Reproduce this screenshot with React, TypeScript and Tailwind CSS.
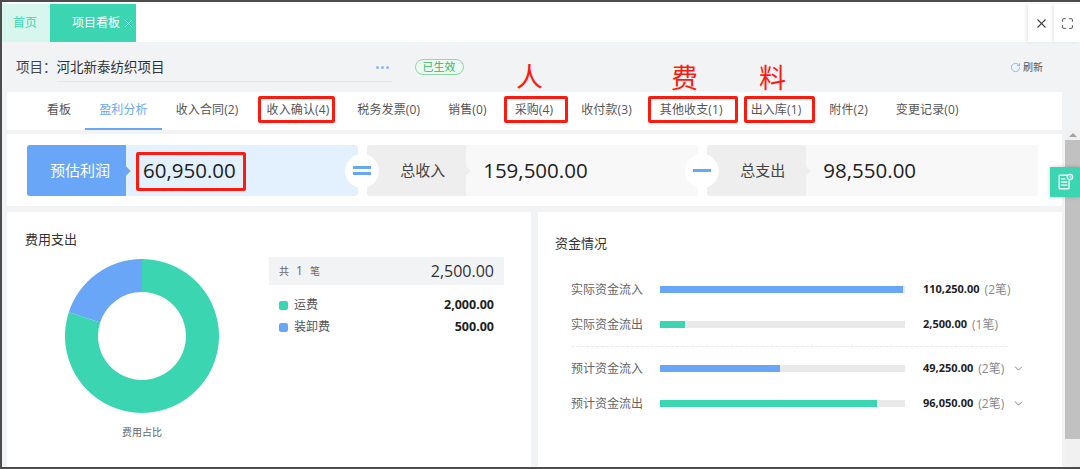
import React from "react";
import { X, Maximize, RotateCw, ChevronDown } from "lucide-react";

const tabs = [
  { label: "看板" },
  { label: "盈利分析", active: true },
  { label: "收入合同(2)" },
  { label: "收入确认(4)", box: "left-[5px] right-[8px]" },
  { label: "税务发票(0)" },
  { label: "销售(0)" },
  { label: "采购(4)", box: "left-[3px] -right-[1px]" },
  { label: "收付款(3)" },
  { label: "其他收支(1)", box: "left-[2px] -right-[1px]" },
  { label: "出入库(1)", box: "left-[7px] right-0" },
  { label: "附件(2)" },
  { label: "变更记录(0)" },
];

const cashRows = [
  { label: "实际资金流入", pct: 99.2, color: "bg-[#69a6f8]", amount: "110,250.00", count: "(2笔)" },
  { label: "实际资金流出", pct: 10, color: "bg-[#3bd6b1]", amount: "2,500.00", count: "(1笔)" },
];

const planRows = [
  { label: "预计资金流入", pct: 49, color: "bg-[#69a6f8]", amount: "49,250.00", count: "(2笔)", more: true },
  { label: "预计资金流出", pct: 88.6, color: "bg-[#3bd6b1]", amount: "96,050.00", count: "(2笔)", more: true },
];

const CashRow = ({ row }: { row: { label: string; pct: number; color: string; amount: string; count: string; more?: boolean } }) => (
  <div className="flex h-[35px] items-center">
    <div className="w-[89px] flex-none text-[12px] text-[#666]">{row.label}</div>
    <div className="h-[7px] w-[245px] flex-none bg-[#e9e9e9]">
      <div className={`h-full ${row.color}`} style={{ width: `${row.pct}%` }} />
    </div>
    <div className="ml-[18px] text-[11px] font-bold text-[#222]">{row.amount}</div>
    <div className="ml-[5px] text-[12px] text-[#888]">{row.count}</div>
    {row.more && <ChevronDown className="ml-[8px] size-[13px] text-[#666]" strokeWidth={1.5} />}
  </div>
);

const Arrow = ({ color }: { color: string }) => (
  <span className={`absolute -right-[3px] top-1/2 size-[8px] -translate-y-1/2 rotate-45 ${color}`} />
);

const Operator = ({ children }: { children: React.ReactNode }) => (
  <div className="absolute -left-[22px] top-1/2 z-10 flex size-[34px] -translate-y-1/2 flex-col items-center justify-center gap-[3px] rounded-full bg-white">
    {children}
  </div>
);

const Handwritten = ({ children, className }: { children: React.ReactNode; className: string }) => (
  <span className={`absolute text-[27px] leading-none text-[#ff1a10] ${className}`}>{children}</span>
);

export default function App() {
  return (
    <div className="relative flex h-[469px] w-[1080px] flex-col overflow-hidden border-y-2 border-l-2 border-[#4d4d4d] bg-[#f2f3f5] font-['Open_Sans','Noto_Sans_CJK_SC',sans-serif] text-[12px] text-[#444]">
      {/* top tabs */}
      <div className="flex h-[40px] flex-none bg-white pt-[2px]">
        <div className="flex w-[48px] items-center justify-center pr-[2px] bg-[#d7f6ed] text-[12px] text-[#3bd6b1]">首页</div>
        <div className="flex w-[86px] items-center gap-[3px] bg-[#3bd6b1] pl-[22px] text-[12px] text-white">
          项目看板
          <X className="size-[11px]" strokeWidth={1.8} />
        </div>
        <div className="ml-auto flex">
          <div className="flex w-[26px] items-center justify-center bg-white shadow-[-2px_0_3px_rgba(0,0,0,0.08)]">
            <X className="size-[15px] text-[#444]" strokeWidth={1.8} />
          </div>
          <div className="flex w-[26px] items-center justify-center bg-white shadow-[-2px_0_3px_rgba(0,0,0,0.08)]">
            <Maximize className="size-[13px] text-[#444]" strokeWidth={1.8} />
          </div>
        </div>
      </div>

      {/* project row */}
      <div className="flex h-[50px] flex-none items-center pl-[14px] pr-[37px]">
        <span className="text-[13.5px] text-[#444]">项目：</span>
        <div className="flex h-[30px] w-[335px] items-center justify-between border-b border-[#e6e7e9] pt-[1px] text-[13.5px] text-[#333]">
          河北新泰纺织项目
          <span className="mr-[3px] flex gap-[2px]">
            <span className="size-[3px] rounded-full bg-[#8ab8f8]" />
            <span className="size-[3px] rounded-full bg-[#8ab8f8]" />
            <span className="size-[3px] rounded-full bg-[#8ab8f8]" />
          </span>
        </div>
        <span className="ml-[23px] flex h-[16px] w-[49px] items-center justify-center rounded-full border border-[#8ed9a9] bg-[#effaf3] text-[11px] text-[#3cb56e]">已生效</span>
        <span className="ml-auto flex items-center gap-[2px] text-[10px] text-[#555]">
          <RotateCw className="size-[11px] text-[#6aa7f8]" strokeWidth={1.6} />
          刷新
        </span>
      </div>

      {/* nav tabs */}
      <div className="ml-[5px] mr-[18px] flex h-[38px] flex-none bg-white pl-[26px]">
        {tabs.map((t) => (
          <div
            key={t.label}
            className={`relative flex items-center px-[14px] text-[12px] tracking-[0.12px] ${t.active ? "border-b-[2px] border-[#6aa7f8] text-[#6aa7f8]" : "pb-[2px] text-[#555]"}`}
          >
            {t.label}
            {t.box && <span className={`absolute bottom-[7px] top-[4px] rounded-[2px] border-[3px] border-[#ff1a10] ${t.box}`} />}
          </div>
        ))}
      </div>

      <Handwritten className="left-[514px] top-[61px]">人</Handwritten>
      <Handwritten className="left-[669px] top-[62px]">费</Handwritten>
      <Handwritten className="left-[757px] top-[62px]">料</Handwritten>

      <div className="flex min-h-0 flex-1">
        <div className="min-w-0 flex-1 pl-[5px] pr-[3px] pt-[4px]">
          {/* profit summary */}
          <div className="grid h-[72px] grid-cols-3 gap-[9.5px] bg-white pb-[10px] pl-[20px] pr-[24px] pt-[11px]">
            <div className="flex rounded-[3px] bg-[#e3f0fe]">
              <div className="relative flex w-[99px] flex-none items-center justify-center rounded-l-[3px] bg-[#69a6f8] pl-[7px] text-[15px] text-white">
                预估利润
                <Arrow color="bg-[#69a6f8]" />
              </div>
              <div className="flex items-center pl-[17px] text-[20.5px] text-[#222]">
                <span className="relative">
                  60,950.00
                  <span className="absolute -bottom-[5px] -left-[7px] -right-[10px] -top-[3px] rounded-[2px] border-[3px] border-[#ff1a10]" />
                </span>
              </div>
            </div>
            <div className="relative flex rounded-[3px] bg-[#f8f8f8]">
              <Operator>
                <span className="h-[3px] w-[18px] bg-[#69a6f8]" />
                <span className="h-[3px] w-[18px] bg-[#69a6f8]" />
              </Operator>
              <div className="relative flex w-[99px] flex-none items-center justify-center rounded-l-[3px] bg-[#eeeeee] pl-[12px] text-[15px] text-[#444]">
                总收入
                <Arrow color="bg-[#eeeeee]" />
              </div>
              <div className="flex items-center pl-[17px] text-[20.5px] text-[#222]">159,500.00</div>
            </div>
            <div className="relative flex rounded-[3px] bg-[#f8f8f8]">
              <Operator>
                <span className="h-[3px] w-[18px] bg-[#69a6f8]" />
              </Operator>
              <div className="relative flex w-[99px] flex-none items-center justify-center rounded-l-[3px] bg-[#eeeeee] pl-[12px] text-[15px] text-[#444]">
                总支出
                <Arrow color="bg-[#eeeeee]" />
              </div>
              <div className="flex items-center pl-[17px] text-[20.5px] text-[#222]">98,550.00</div>
            </div>
          </div>

          <div className="mt-[6px] grid h-[255px] grid-cols-2 gap-[7px]">
            {/* expenses */}
            <div className="bg-white pt-[17px]">
              <div className="pl-[18px] text-[13px] leading-[20px] text-[#333]">费用支出</div>
              <div className="flex">
                <div className="ml-[58px] mt-[10px] flex w-[154px] flex-none flex-col items-center">
                  <svg viewBox="0 0 154 154" className="size-[154px]">
                    <path d="M77 0 A77 77 0 1 1 3.77 53.2 L35.15 63.4 A44 44 0 1 0 77 33 Z" fill="#3bd6b1" />
                    <path d="M77 0 A77 77 0 0 0 3.77 53.2 L35.15 63.4 A44 44 0 0 1 77 33 Z" fill="#69a6f8" />
                  </svg>
                  <div className="mt-[12px] text-[10px] text-[#666]">费用占比</div>
                </div>
                <div className="ml-[50px] mt-[8px] w-[235px] flex-none">
                  <div className="flex h-[28px] items-center justify-between bg-[#f2f3f5] px-[10px]">
                    <span className="text-[10px] text-[#666]">
                      共<span className="mx-[7px] text-[12px]">1</span>笔
                    </span>
                    <span className="text-[16px] text-[#333]">2,500.00</span>
                  </div>
                  <div className="mt-[9px] px-[10px]">
                    <div className="flex h-[22px] items-center">
                      <span className="mr-[6px] size-[9px] rounded-[2px] bg-[#3bd6b1]" />
                      <span className="text-[12px] text-[#555]">运费</span>
                      <span className="ml-auto text-[12.5px] font-bold text-[#222]">2,000.00</span>
                    </div>
                    <div className="flex h-[22px] items-center">
                      <span className="mr-[6px] size-[9px] rounded-[2px] bg-[#69a6f8]" />
                      <span className="text-[12px] text-[#555]">装卸费</span>
                      <span className="ml-auto text-[12.5px] font-bold text-[#222]">500.00</span>
                    </div>
                  </div>
                </div>
              </div>
            </div>

            {/* cash flow */}
            <div className="bg-white pl-[17px] pt-[21px]">
              <div className="text-[13px] leading-[20px] text-[#333]">资金情况</div>
              <div className="mt-[19px] pl-[16px]">
                {cashRows.map((r) => (
                  <CashRow key={r.label} row={r} />
                ))}
                <div className="my-[4px] w-[437px] border-t border-dashed border-[#e8e8e8]" />
                {planRows.map((r) => (
                  <CashRow key={r.label} row={r} />
                ))}
              </div>
            </div>
          </div>
        </div>

        {/* scrollbar */}
        <div className="flex w-[15px] flex-none flex-col items-center bg-[#f1f1f1]">
          <span className="mt-[3px] h-0 w-0 border-x-[4px] border-b-[4px] border-x-transparent border-b-[#a3a3a3]" />
          <div className="mt-[3px] h-[299px] w-full bg-[#c1c1c1]" />
        </div>
      </div>

      {/* floating button */}
      <div className="absolute right-0 top-[165px] flex h-[30px] w-[30px] items-center justify-center bg-[#3bd6b1] shadow-[0_0_4px_rgba(0,0,0,0.2)]">
        <svg viewBox="0 0 20 20" className="size-[18px]" fill="none" stroke="white" strokeWidth="1.4" strokeLinecap="round">
          <path d="M12 2.5H4.5a1 1 0 0 0-1 1v13a1 1 0 0 0 1 1h9a1 1 0 0 0 1-1V9" />
          <path d="M6 6.5h4M6 10h6M6 13.5h6" />
          <circle cx="15.5" cy="4.5" r="3" />
          <path d="M15.5 3.2v1.4h1.2" strokeWidth="1" />
        </svg>
      </div>
    </div>
  );
}
